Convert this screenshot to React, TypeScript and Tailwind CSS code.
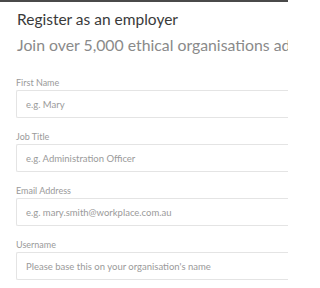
const fields = [
  { label: "First Name", placeholder: "e.g. Mary" },
  { label: "Job Title", placeholder: "e.g. Administration Officer" },
  { label: "Email Address", placeholder: "e.g. mary.smith@workplace.com.au" },
  { label: "Username", placeholder: "Please base this on your organisation's name" },
];

export default function App() {
  return (
    <div className="w-[288px] h-[288px] overflow-hidden bg-white font-['Lato',sans-serif]">
      <div className="h-[2px] bg-[#4a4a4a]" />
      <div className="pl-[17px] pt-[7px] overflow-hidden">
        <h1 className="text-[15.5px] leading-[20px] text-[#3a3a3a] whitespace-nowrap">Register as an employer</h1>
        <p className="mt-[5px] text-[15.8px] leading-[22px] text-[#8a8a8a] whitespace-nowrap">
          Join over 5,000 ethical organisations advertising with us
        </p>
      </div>
      <form className="pl-[16px] pt-[21px]">
        {fields.map((f) => (
          <div key={f.label} className="mb-[13px]">
            <label className="block text-[9px] leading-[12px] text-[#9a9a9a] mb-[1px]">{f.label}</label>
            <input
              className="block w-full h-[28px] border border-r-0 border-[#e4e4e4] rounded-l-[2px] px-[9px] text-[9.5px] text-[#333] placeholder:text-[#9a9a9a] outline-none"
              placeholder={f.placeholder}
            />
          </div>
        ))}
      </form>
    </div>
  );
}
